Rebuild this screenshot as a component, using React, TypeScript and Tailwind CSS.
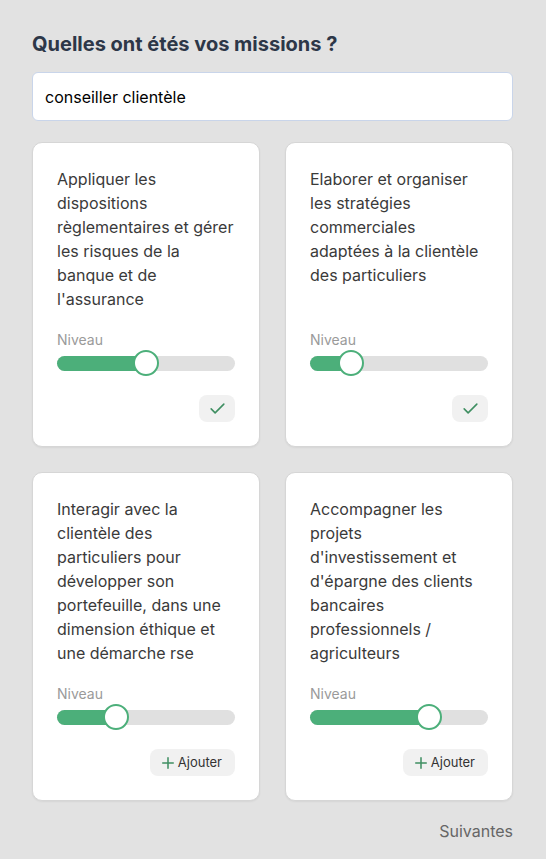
import React from 'react'

type Mission = {
  label: string
  level: number
  added: boolean
}

const missions: Mission[] = [
  {
    label: "Appliquer les dispositions règlementaires et gérer les risques de la banque et de l'assurance",
    level: 50,
    added: true,
  },
  {
    label: 'Elaborer et organiser les stratégies commerciales adaptées à la clientèle des particuliers',
    level: 23,
    added: true,
  },
  {
    label:
      'Interagir avec la clientèle des particuliers pour développer son portefeuille, dans une dimension éthique et une démarche rse',
    level: 33,
    added: false,
  },
  {
    label:
      "Accompagner les projets d'investissement et d'épargne des clients bancaires professionnels / agriculteurs",
    level: 67,
    added: false,
  },
]

function LevelSlider({ value }: { value: number }) {
  // thumb centre sits on the end of the fill
  return (
    <div className="relative h-[26px] w-full">
      <div className="absolute left-0 right-0 top-[5.5px] h-[15px] rounded-full bg-[#e0e0e0]" />
      <div
        className="absolute left-0 top-[5.5px] h-[15px] rounded-l-full bg-[#4caf7a]"
        style={{ width: `${value}%` }}
      />
      <div
        className="absolute top-0 h-[26px] w-[26px] -translate-x-1/2 rounded-full border-2 border-[#4caf7a] bg-white"
        style={{ left: `${value}%` }}
      />
    </div>
  )
}

function MissionCard({ mission }: { mission: Mission }) {
  return (
    <div className="flex flex-col rounded-[10px] border border-[#d6d6d6] bg-white p-[24px] shadow-[0_1px_2px_rgba(0,0,0,0.06)]">
      <p className="text-[16px] leading-[24px] text-[#3a3a3a]">{mission.label}</p>
      <div className="flex-1" />
      <span className="mt-[19px] text-[14px] leading-[20px] text-[#9a9a9a]">Niveau</span>
      <LevelSlider value={mission.level} />
      <div className="mt-[19px] flex justify-end">
        {mission.added ? (
          <button className="flex h-[27px] w-[36px] items-center justify-center rounded-lg bg-[#f1f1f1]">
            <svg width="19" height="19" viewBox="0 0 24 24" fill="none" stroke="#3f8f62" strokeWidth="2" strokeLinecap="round" strokeLinejoin="round">
              <path d="M4 12.5l5 5L20 6.5" />
            </svg>
          </button>
        ) : (
          <button className="flex h-[27px] items-center gap-[3px] rounded-lg bg-[#f1f1f1] pl-[11px] pr-[13px] text-[13px] text-[#333]">
            <svg width="14" height="14" viewBox="0 0 24 24" fill="none" stroke="#3f8f62" strokeWidth="2.6" strokeLinecap="round">
              <path d="M12 3v18M3 12h18" />
            </svg>
            Ajouter
          </button>
        )}
      </div>
    </div>
  )
}

export default function App() {
  return (
    <div className="min-h-[859px] bg-[#e2e2e2] pl-[32px] pr-[33px] pt-[30px] font-['Inter','Noto_Sans',sans-serif]">
      <h1 className="text-[20px] font-bold leading-[28px] text-[#2d3748]">Quelles ont étés vos missions ?</h1>
      <input
        readOnly
        value="conseiller clientèle"
        className="mt-[14px] h-[49px] w-full rounded-[6px] border border-[#c9d5ea] bg-white px-[12px] text-[16px] text-black outline-none"
      />
      <div className="mt-[21px] grid grid-cols-2 gap-x-[25px] gap-y-[25px]">
        {missions.map((m) => (
          <MissionCard key={m.label} mission={m} />
        ))}
      </div>
      <div className="mt-[18px] flex justify-end">
        <span className="text-[16px] leading-[24px] text-[#666]">Suivantes</span>
      </div>
    </div>
  )
}
